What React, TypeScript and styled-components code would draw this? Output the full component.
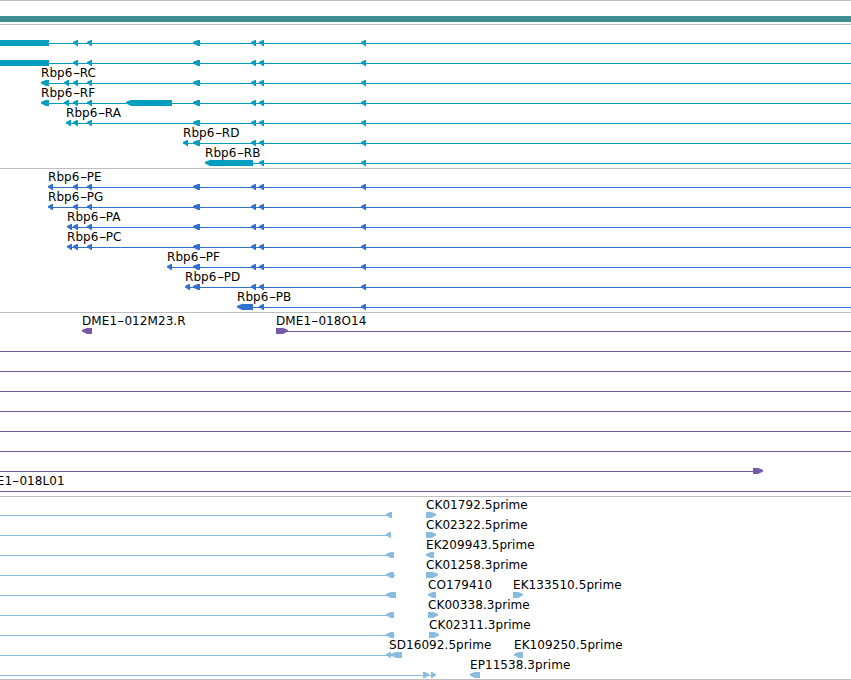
import React from 'react';
import styled, { createGlobalStyle } from 'styled-components';

const GlobalStyle = createGlobalStyle`
    body {
        margin: 0;
        background: #fff;
        overflow: hidden;
    }
`;

const colors = {
    border: '#bebebe',
    sequence: '#3f8f94',
    transcript: '#009fc0',
    protein: '#3070d0',
    bac: '#7858a8',
    est: '#88bbdd',
};

const Browser = styled.div`
    display: flex;
    flex-direction: column;
    width: 851px;
    height: 680px;
    overflow: hidden;
    background: #fff;
    border-top: 1px solid ${colors.border};
    box-sizing: border-box;
`;

const SequenceTrack = styled.div`
    flex: none;
    padding: 15px 0 2px;
`;

const SequenceBar = styled.div`
    height: 6px;
    background: ${colors.sequence};
`;

const TrackContainer = styled.section`
    display: flex;
    flex-direction: column;
    flex: none;
    padding: 1px 0 2px;
    border-top: 1px solid ${colors.border};

    &:last-of-type {
        padding-bottom: 1px;
        border-bottom: 1px solid ${colors.border};
    }
`;

const RowContainer = styled.div`
    position: relative;
    height: 20px;
`;

const RowDrawing = styled.svg<{ $color: string }>`
    display: block;
    width: 851px;
    height: 20px;
    fill: ${({ $color }) => $color};
`;

const Label = styled.span<{ $x: number }>`
    position: absolute;
    top: 0;
    left: ${({ $x }) => $x}px;
    font-family: 'DejaVu Sans', sans-serif;
    font-size: 12px;
    line-height: 14px;
    letter-spacing: 0.07px;
    white-space: nowrap;
    color: #000;
`;

const Dash = styled.span`
    display: inline-block;
    width: 7.3px;
    text-align: center;
    transform: scaleX(1.7);
`;

type Direction = 'left' | 'right' | 'none';
type Feature = [number, number, Direction?];

interface Row {
    labels?: [number, string][];
    line?: [number, number];
    features?: Feature[];
}

const END = 851;

const donor: Feature[] = [[251, 256], [259, 264], [361, 366]];
const middle: Feature[] = [[193, 200], ...donor];
const shared: Feature[] = [[73, 78], [87, 92], ...middle];

const transcripts: Row[] = [
    { line: [0, END], features: [[0, 49, 'none'], ...shared] },
    { line: [0, END], features: [[0, 49, 'none'], ...shared] },
    { labels: [[41, 'Rbp6-RC']], line: [45, END], features: [[41, 49], [64, 69], ...shared] },
    { labels: [[41, 'Rbp6-RF']], line: [45, END], features: [[41, 49], [64, 69], [126, 172], ...shared] },
    { labels: [[66, 'Rbp6-RA']], line: [68, END], features: [[66, 71], ...shared] },
    { labels: [[183, 'Rbp6-RD']], line: [185, END], features: [[183, 188], ...middle] },
    { labels: [[205, 'Rbp6-RB']], line: [210, END], features: [[205, 253], [259, 264], [361, 366]] },
];

const proteins: Row[] = [
    { labels: [[48, 'Rbp6-PE']], line: [50, END], features: [[48, 53], ...shared] },
    { labels: [[48, 'Rbp6-PG']], line: [50, END], features: [[48, 53], ...shared] },
    { labels: [[67, 'Rbp6-PA']], line: [69, END], features: [[67, 72], ...shared] },
    { labels: [[67, 'Rbp6-PC']], line: [69, END], features: [[67, 72], ...shared] },
    { labels: [[167, 'Rbp6-PF']], line: [169, END], features: [[167, 172], ...middle] },
    { labels: [[185, 'Rbp6-PD']], line: [187, END], features: [[185, 190], ...middle] },
    { labels: [[237, 'Rbp6-PB']], line: [242, END], features: [[237, 253], [259, 264], [361, 366]] },
];

const bacs: Row[] = [
    {
        labels: [[82, 'DME1-012M23.R'], [276, 'DME1-018O14']],
        line: [284, END],
        features: [[82, 92], [276, 288, 'right']],
    },
    { line: [0, END] },
    { line: [0, END] },
    { line: [0, END] },
    { line: [0, END] },
    { line: [0, END] },
    { line: [0, END] },
    { line: [0, 755], features: [[753, 763, 'right']] },
    { labels: [[-23, 'DME1-018L01']], line: [0, END] },
];

const ests: Row[] = [
    { labels: [[426, 'CK01792.5prime']], line: [0, 388], features: [[386, 392], [426, 436, 'right']] },
    { labels: [[426, 'CK02322.5prime']], line: [0, 388], features: [[386, 391], [426, 436, 'right']] },
    { labels: [[426, 'EK209943.5prime']], line: [0, 388], features: [[386, 394], [426, 434]] },
    { labels: [[426, 'CK01258.3prime']], line: [0, 395], features: [[386, 394], [426, 438, 'right']] },
    {
        labels: [[428, 'CO179410'], [513, 'EK133510.5prime']],
        line: [0, 388],
        features: [[386, 396], [428, 436], [513, 523, 'right']],
    },
    { labels: [[428, 'CK00338.3prime']], line: [0, 388], features: [[386, 394], [428, 438, 'right']] },
    { labels: [[429, 'CK02311.3prime']], line: [0, 395], features: [[386, 394], [429, 439, 'right']] },
    {
        labels: [[389, 'SD16092.5prime'], [514, 'EK109250.5prime']],
        line: [0, 392],
        features: [[386, 391], [391, 402], [514, 523]],
    },
    {
        labels: [[470, 'EP11538.3prime']],
        line: [0, 433],
        features: [[423, 429, 'right'], [431, 436, 'right'], [470, 480]],
    },
];

// a box of 6px with a pointed end, small features are nothing but the point
function featurePoints([start, end, direction = 'left']: Feature) {
    if (direction === 'none') {
        return `${start},14 ${end},14 ${end},20 ${start},20`;
    }
    const head = end - start > 6 ? 5 : 4;
    const [tip, back, sign] = direction === 'left' ? [start, end, 1] : [end, start, -1];
    const neck = tip + sign * head;
    const middleX = tip + sign * 2;
    return `${tip},16 ${middleX},15 ${neck},14 ${back},14 ${back},20 ${neck},20 ${middleX},18.6 ${tip},17.4`;
}

function LabelText({ text }: { text: string }) {
    const [head, tail] = text.split('-');
    if (!tail) {
        return <>{text}</>;
    }
    return (
        <>
            {head}
            <Dash>-</Dash>
            {tail}
        </>
    );
}

function Track({ rows, color }: { rows: Row[]; color: string }) {
    return (
        <TrackContainer>
            {rows.map(({ labels = [], line, features = [] }, index) => (
                <RowContainer key={index}>
                    <RowDrawing $color={color} viewBox="0 0 851 20">
                        {line && <rect x={line[0]} y={17} width={line[1] - line[0]} height={1} />}
                        {features.map((feature) => (
                            <polygon key={feature[0]} points={featurePoints(feature)} />
                        ))}
                    </RowDrawing>
                    {labels.map(([x, text]) => (
                        <Label key={text} $x={x}>
                            <LabelText text={text} />
                        </Label>
                    ))}
                </RowContainer>
            ))}
        </TrackContainer>
    );
}

function App() {
    return (
        <>
            <GlobalStyle />
            <Browser>
                <SequenceTrack>
                    <SequenceBar />
                </SequenceTrack>
                <Track rows={transcripts} color={colors.transcript} />
                <Track rows={proteins} color={colors.protein} />
                <Track rows={bacs} color={colors.bac} />
                <Track rows={ests} color={colors.est} />
            </Browser>
        </>
    );
}

export default App;
